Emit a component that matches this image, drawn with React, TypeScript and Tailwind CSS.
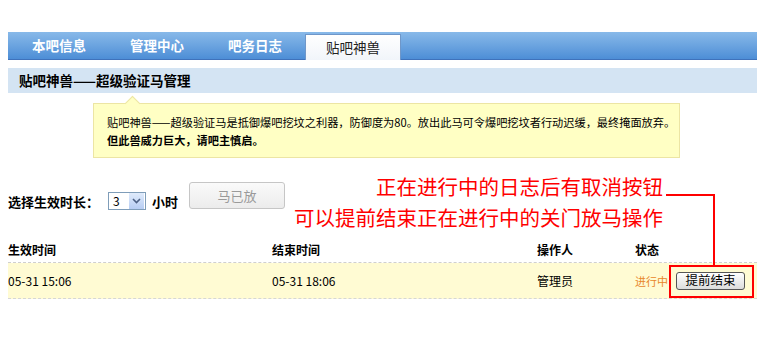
import React from 'react';

const tabs = ['本吧信息', '管理中心', '吧务日志'];

export default function App() {
  return (
    <div
      className="relative w-[757px] h-[360px] overflow-hidden bg-white text-black"
      style={{ fontFamily: '"Noto Sans CJK SC", "Liberation Sans", sans-serif' }}
    >
      {/* Tab bar */}
      <div className="ml-[8px] mt-[32px] h-[28px] flex items-end pl-[2px] bg-gradient-to-b from-[#88b9e9] to-[#4d8ed6] border-b border-[#3f72bb]">
        {tabs.map((t) => (
          <div
            key={t}
            className="w-[98px] h-[27px] flex items-center justify-center text-[13.5px] font-bold text-white"
          >
            {t}
          </div>
        ))}
        <div className="ml-[1px] -mb-[1px] w-[96px] h-[26px] flex items-center justify-center text-[13.5px] text-[#222] bg-gradient-to-b from-white to-[#f1f5fa] border border-b-0 border-[#6f97c9]">
          贴吧神兽
        </div>
      </div>

      {/* Section title */}
      <div className="ml-[8px] mt-[8px] h-[25px] flex items-center pl-[11px] bg-[#d4e4f3] text-[13.5px] font-bold">
        贴吧神兽——超级验证马管理
      </div>

      {/* Info box */}
      <div className="relative ml-[93px] mt-[10px] w-[587px] h-[55px] bg-[#ffffc4] border border-[#ece5a4] pl-[13px] pt-[9px] text-[11.2px] leading-[18px] whitespace-nowrap">
        <div className="absolute -top-[6px] left-[33px] w-[11px] h-[11px] rotate-45 bg-[#ffffc4] border-l border-t border-[#ece5a4]" />
        <p className="relative">
          贴吧神兽——超级验证马是抵御爆吧挖坟之利器，防御度为80。放出此马可令爆吧挖坟者行动迟缓，最终掩面放弃。
        </p>
        <p className="relative font-bold">但此兽威力巨大，请吧主慎启。</p>
      </div>

      {/* Duration row */}
      <div className="ml-[8px] mt-[24px] h-[28px] flex items-start">
        <span className="mt-[11px] text-[13px] font-bold leading-[18px]">选择生效时长：</span>
        <div className="mt-[10px] ml-[9px] w-[38px] h-[18px] flex items-center border border-[#7f9db9] bg-white">
          <span className="flex-1 pl-[4px] text-[12px] leading-none">3</span>
          <span className="w-[15px] h-[16px] mr-[1px] flex items-center justify-center bg-gradient-to-b from-[#e0ebfb] to-[#b7cdf3]">
            <svg width="9" height="6" viewBox="0 0 9 6">
              <path d="M1 1 L4.5 4.5 L8 1" fill="none" stroke="#4d6185" strokeWidth="1.6" />
            </svg>
          </span>
        </div>
        <span className="mt-[11px] ml-[6px] text-[13px] font-bold leading-[18px]">小时</span>
        <button className="ml-[11px] w-[96px] h-[27px] rounded-[3px] border border-[#c6c6c6] bg-gradient-to-b from-[#fafafa] to-[#ececec] text-[13px] text-[#9a9a9a]">
          马已放
        </button>
      </div>

      {/* Log table */}
      <div className="ml-[8px] mt-[28px]">
        <div className="grid grid-cols-[264px_265px_98px_41px_1fr] h-[25px] items-center text-[12px] font-bold border-b border-dashed border-[#cfcfcf]">
          <span>生效时间</span>
          <span>结束时间</span>
          <span>操作人</span>
          <span>状态</span>
          <span />
        </div>
        <div className="grid grid-cols-[264px_265px_98px_41px_1fr] h-[36px] items-center text-[12px] bg-[#fffbd3] border-b border-dashed border-[#d6d6d6]">
          <span>05-31 15:06</span>
          <span>05-31 18:06</span>
          <span>管理员</span>
          <span className="mt-[2px] text-[11px] text-[#e8862a]">进行中</span>
          <span>
            <button className="w-[69px] h-[18px] rounded-[3px] border border-[#555] bg-gradient-to-b from-white to-[#dcdcdc] text-[12.5px] leading-none">
              提前结束
            </button>
          </span>
        </div>
      </div>

      {/* Annotation */}
      <div className="absolute top-[171px] right-[94px] text-right text-[20.5px] leading-[31px] text-[#ff0000]">
        <p>正在进行中的日志后有取消按钮</p>
        <p>可以提前结束正在进行中的关门放马操作</p>
      </div>
      <div className="absolute left-[666px] top-[194px] w-[49px] h-[2px] bg-[#ff0000]" />
      <div className="absolute left-[713px] top-[194px] w-[2px] h-[72px] bg-[#ff0000]" />
      <div className="absolute left-[669px] top-[265px] w-[85px] h-[33px] border-2 border-[#ff0000]" />
    </div>
  );
}
